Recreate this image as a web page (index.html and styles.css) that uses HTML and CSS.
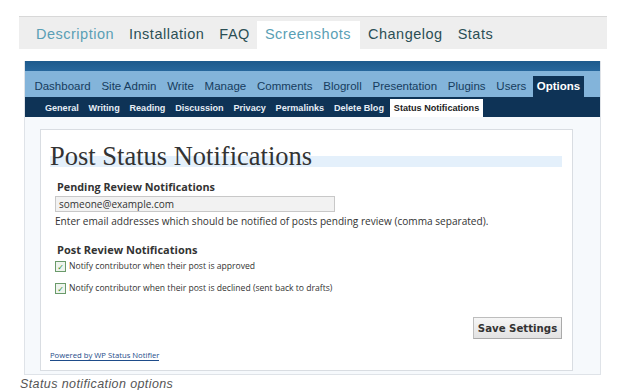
FILE: index.html
```html
<!DOCTYPE html>
<html lang="en">
<head>
  <meta charset="UTF-8" />
  <title>WP Status Notifier - Screenshots</title>
  <link rel="stylesheet" href="styles.css">
</head>
<body>
  <div class="page">
    <!-- plugin directory tabs -->
    <ul class="tabs">
      <li class="tab link">Description</li>
      <li class="tab">Installation</li>
      <li class="tab">FAQ</li>
      <li class="tab link active">Screenshots</li>
      <li class="tab">Changelog</li>
      <li class="tab">Stats</li>
    </ul>

    <!-- the screenshot itself -->
    <div class="shot">
      <div class="wp-head"></div>
      <ul class="wp-menu">
        <li>Dashboard</li>
        <li>Site Admin</li>
        <li>Write</li>
        <li>Manage</li>
        <li>Comments</li>
        <li>Blogroll</li>
        <li>Presentation</li>
        <li>Plugins</li>
        <li>Users</li>
        <li class="current">Options</li>
      </ul>
      <ul class="wp-sub">
        <li>General</li>
        <li>Writing</li>
        <li>Reading</li>
        <li>Discussion</li>
        <li>Privacy</li>
        <li>Permalinks</li>
        <li>Delete Blog</li>
        <li class="current">Status Notifications</li>
      </ul>
      <div class="wp-body">
        <div class="wrap">
          <h2 class="title">Post Status Notifications</h2>
          <h3 class="label">Pending Review Notifications</h3>
          <div class="field">someone@example.com</div>
          <p class="help">Enter email addresses which should be notified of posts pending review (comma separated).</p>
          <h3 class="label second">Post Review Notifications</h3>
          <label class="check"><span class="box">&#10003;</span>Notify contributor when their post is approved</label>
          <label class="check"><span class="box">&#10003;</span>Notify contributor when their post is declined (sent back to drafts)</label>
          <div class="actions">
            <button class="save">Save Settings</button>
          </div>
          <a class="powered">Powered by WP Status Notifier</a>
        </div>
      </div>
    </div>
    <p class="caption">Status notification options</p>
  </div>
</body>
</html>
```

FILE: styles.css
```css
/* Reset */
html, body {
  margin: 0;
  padding: 0;
  background: #fff;
  overflow: hidden;
}
ul { list-style: none; margin: 0; padding: 0; }
li { white-space: nowrap; flex-shrink: 0; }

.page {
  padding: 16px 13px 0 19px;
  font-family: "Liberation Sans", Arial, sans-serif;
}

/* Plugin page tabs */
.tabs {
  display: flex;
  height: 32px;
  background: #eeeeee;
  border-top: 1px solid #d8d8d8;
  padding-left: 9px;
  align-items: flex-end;
}
.tab {
  height: 28px;
  line-height: 26px;
  padding: 0 7px 0 8px;
  font-size: 14.5px;
  letter-spacing: 0.5px;
  color: #2b4f55;
}
.tab.link { color: #5a9fb5; }
.tab.active {
  background: #fff;
  padding: 0 9px 0 8px;
}

/* Screenshot frame */
.shot {
  margin: 12px 6px 0 5px;
  border: 1px solid #dfe3e8;
  border-top: 0;
  background: #f6f9fc;
  font-family: "Open Sans", "DejaVu Sans", sans-serif;
}
.wp-head {
  height: 10px;
  background: linear-gradient(#1d5a8c, #27679c);
}
.wp-menu {
  display: flex;
  height: 26px;
  align-items: flex-end;
  background: #83b4da;
  padding-left: 4px;
  font-family: "Liberation Sans", Arial, sans-serif;
}
.wp-menu li {
  height: 21px;
  line-height: 20px;
  padding: 0 5.4px;
  font-size: 11.5px;
  color: #163c5e;
}
.wp-menu li.current {
  background: #0e3356;
  color: #fff;
  font-weight: bold;
  margin-left: 1px;
  padding: 0 4px;
}
.wp-sub {
  display: flex;
  height: 20px;
  align-items: flex-end;
  background: #0e3356;
  padding-left: 15px;
  font-family: "Liberation Sans", Arial, sans-serif;
}
.wp-sub li {
  height: 18px;
  line-height: 18px;
  padding: 0 4.9px;
  font-size: 9.1px;
  font-weight: bold;
  color: #e6eef6;
}
.wp-sub li.current {
  background: #fff;
  color: #222;
  padding: 0 4px;
  margin-left: 1px;
}

.wp-body {
  padding: 12px 27px 3px 15px;
}
.wrap {
  height: 240px;
  background: #fff;
  border: 1px solid #d9dde2;
  padding: 0 10px 0 9px;
}

.title {
  margin: 13px 0 0;
  font-family: "Liberation Serif", "Times New Roman", serif;
  font-weight: normal;
  font-size: 26.5px;
  line-height: 26px;
  color: #333;
  background: linear-gradient(transparent 13px, #e4f0fb 13px, #e4f0fb 24px, transparent 24px);
}
.label {
  margin: 11px 0 0 7px;
  font-size: 10.8px;
  line-height: 13px;
  font-weight: bold;
  color: #333;
}
.label.second { margin-top: 16px; font-size: 11px; }
.field {
  margin: 3px 0 0 5px;
  width: 272px;
  height: 14px;
  line-height: 14px;
  padding: 0 3px;
  background: #f2f2f2;
  border: 1px solid #c8c8c8;
  font-size: 10px;
  color: #333;
}
.help {
  margin: 3px 0 0 5px;
  font-size: 10.1px;
  line-height: 12px;
  color: #333;
}
.check {
  display: flex;
  align-items: center;
  height: 11px;
  margin: 5px 0 0 5px;
  font-size: 8.6px;
  line-height: 11px;
  color: #333;
}
.check + .check { margin-top: 11px; }
.box {
  width: 9px;
  height: 9px;
  margin-right: 3px;
  border: 1px solid #6a9a6a;
  background: #eef4ee;
  color: #2f8a2f;
  font-size: 8px;
  line-height: 9px;
  text-align: center;
  font-weight: bold;
}
.actions {
  display: flex;
  justify-content: flex-end;
  margin-top: 23px;
}
.save {
  width: 89px;
  height: 22px;
  font-family: "DejaVu Sans", sans-serif;
  font-size: 10.2px;
  font-weight: bold;
  color: #333;
  background: linear-gradient(#f6f6f6, #e2e2e2);
  border: 1px solid #bdbdbd;
  border-right-color: #aaa;
  border-bottom-color: #aaa;
  padding: 0;
}
.powered {
  display: block;
  width: max-content;
  margin: 12px 0 0 0;
  font-size: 7.7px;
  line-height: 9px;
  color: #1e4c8a;
  border-bottom: 1px solid #1e4c8a;
}

.caption {
  margin: 2px 0 0 1px;
  font-size: 12.5px;
  line-height: 14px;
  font-style: italic;
  color: #555;
  letter-spacing: 0.4px;
}
```
